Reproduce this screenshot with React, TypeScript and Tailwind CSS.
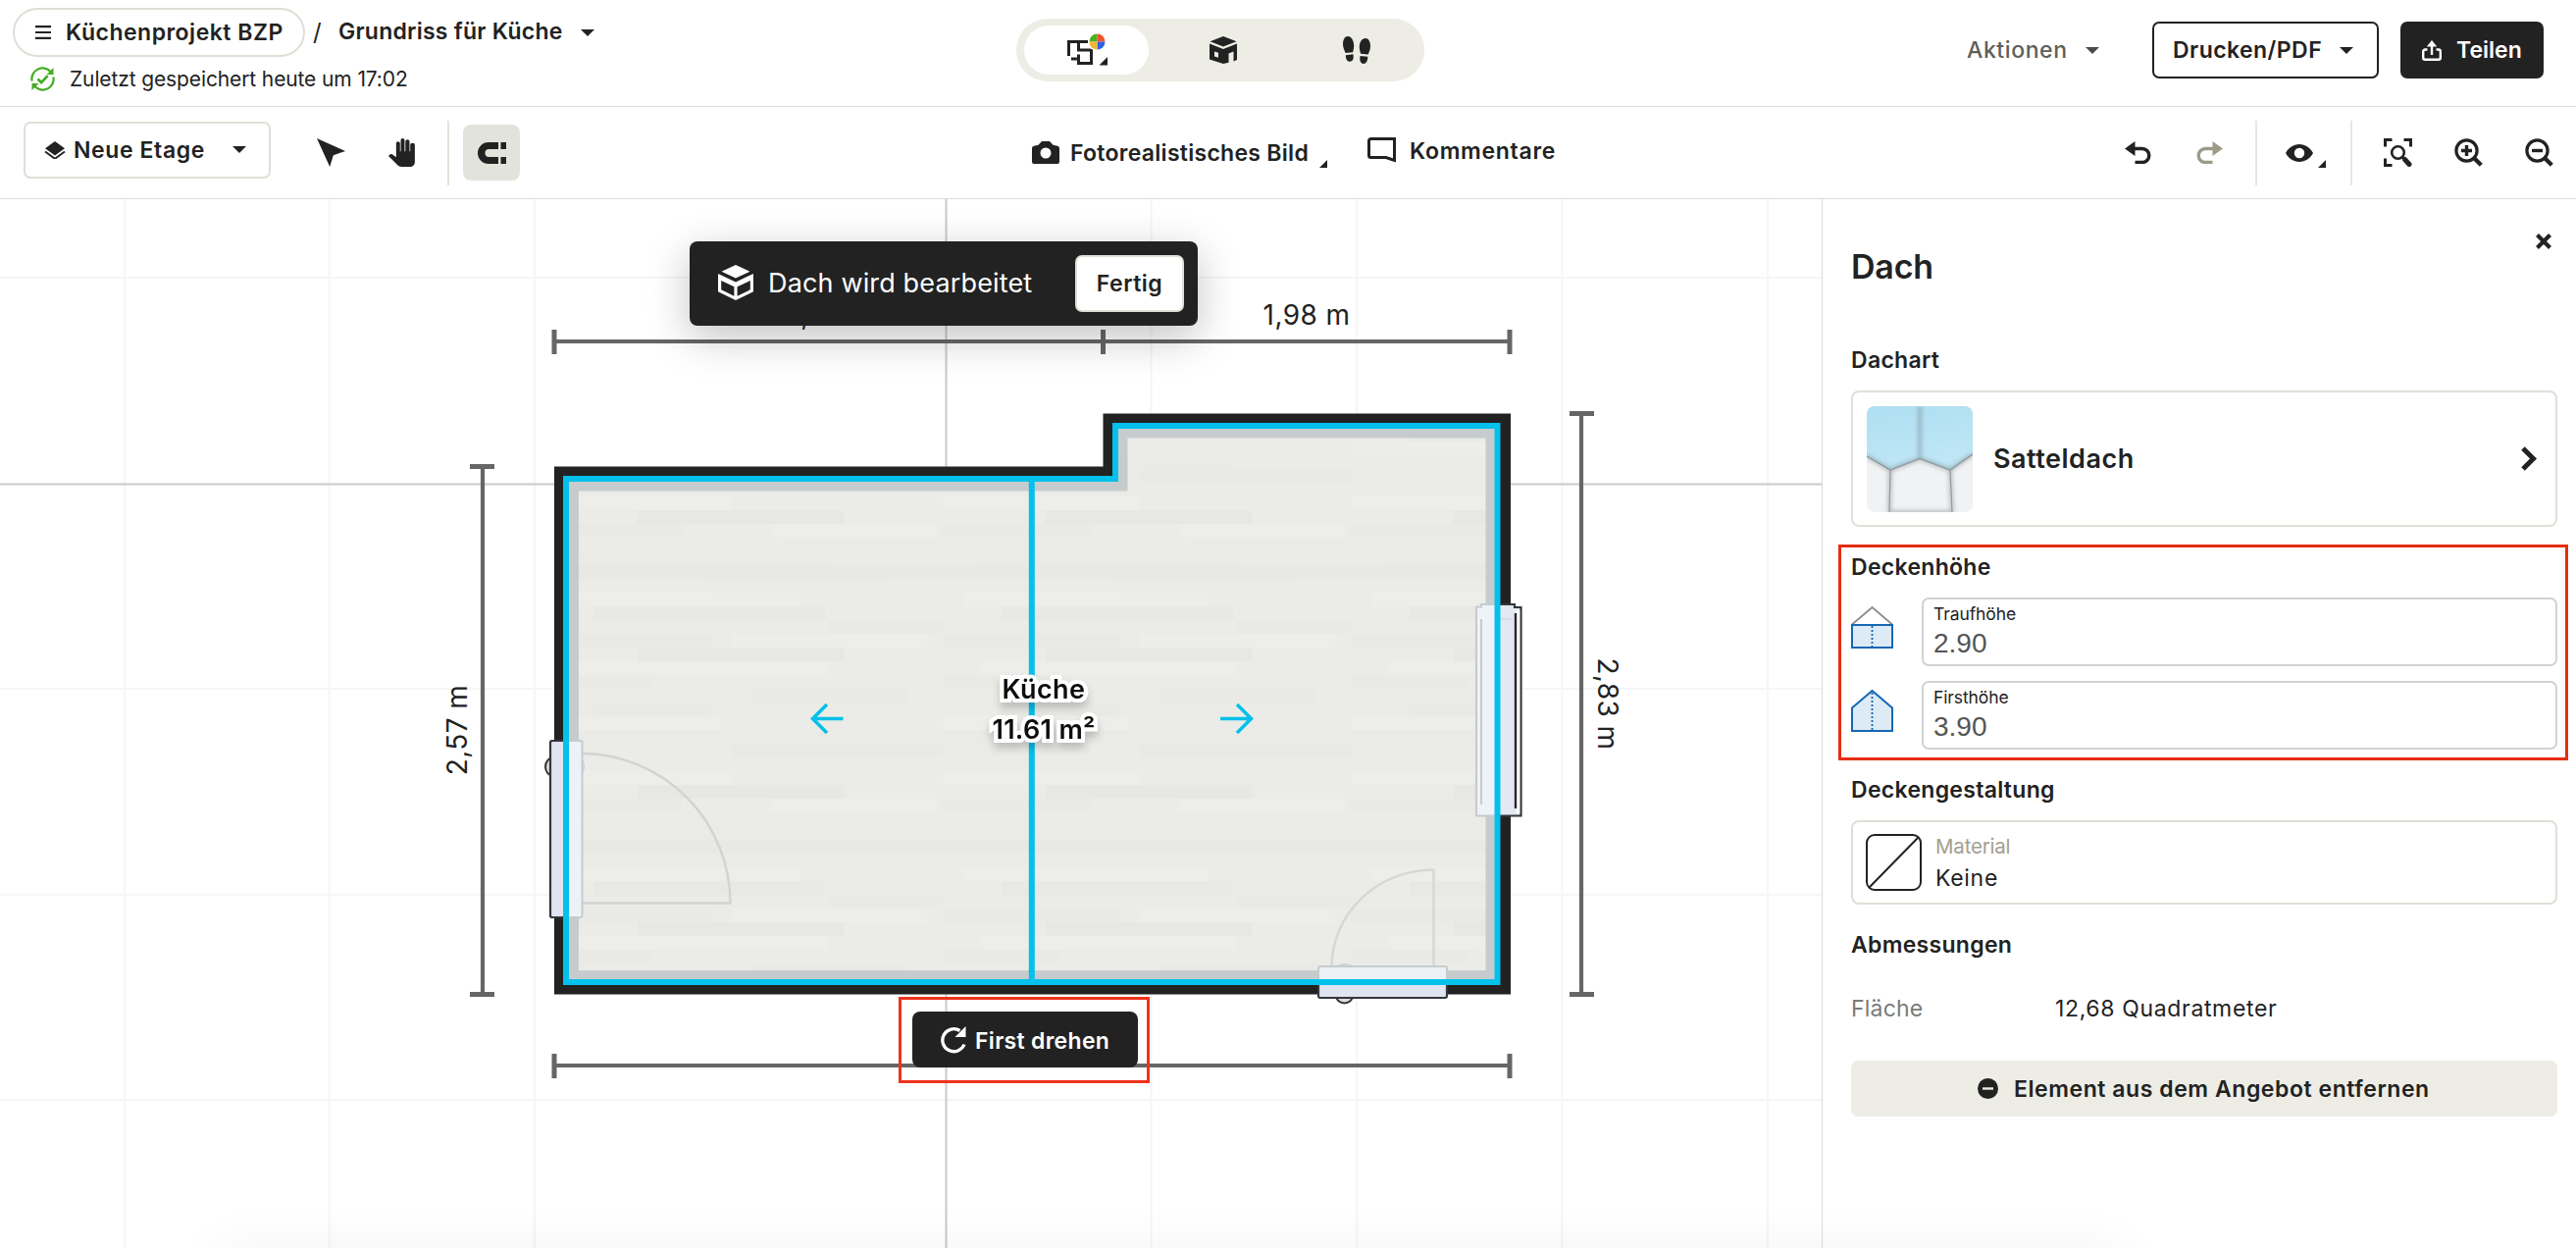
import type { ReactNode } from 'react';

type IconProps = { className?: string };

const Caret = ({ className = '' }: IconProps) => (
  <svg viewBox="0 0 14 7" className={`w-[14px] h-[7px] shrink-0 ${className}`} fill="currentColor">
    <path d="M0 0h14L7 7z" />
  </svg>
);

const Corner = ({ className = '' }: IconProps) => (
  <svg viewBox="0 0 8 8" className={`w-2 h-2 shrink-0 ${className}`} fill="currentColor">
    <path d="M8 0v8H0z" />
  </svg>
);

const SavedIcon = () => (
  <svg viewBox="0 0 25 25" className="w-[25px] h-[25px] shrink-0" fill="none" stroke="#42ad22" strokeWidth="2.2">
    <path d="M1.6 14.5A11 11 0 0 1 20.5 5" />
    <path d="M23.4 10.5A11 11 0 0 1 4.5 20" />
    <path d="M23.5 1v7h-7z" fill="#42ad22" stroke="none" />
    <path d="M1.5 24v-7h7z" fill="#42ad22" stroke="none" />
    <path d="M7.5 12.5l3.6 3.6 6.6-7" strokeWidth="2.8" />
  </svg>
);

const LayersIcon = () => (
  <svg viewBox="0 0 22 18" className="w-[22px] h-[18px] shrink-0" fill="currentColor">
    <path d="M11 0l10 7.2-10 7.3L1 7.2z" />
    <path d="M1 10.6l10 7.2 10-7.2" fill="none" stroke="currentColor" strokeWidth="1.9" />
  </svg>
);

const CursorIcon = () => (
  <svg viewBox="0 0 29 29" className="w-[29px] h-[29px]" fill="currentColor">
    <path d="M0 0l29 13-12.2 4.2L13.2 29z" />
  </svg>
);

const HandIcon = () => (
  <svg viewBox="1 0 22 24" className="w-[27px] h-[29px]" fill="currentColor" preserveAspectRatio="none">
    <path d="M22.9 5.5V20c0 2.2-1.8 4-4 4h-7.2c-1.1 0-2.1-.4-2.9-1.2L1 14.8s1.2-1.2 1.3-1.2c.7-.5 1.5-.3 2.1.1L7.4 16V4.2c0-.9.7-1.6 1.6-1.6s1.6.7 1.6 1.6V11h.6V1.6c0-.9.7-1.6 1.6-1.6s1.6.7 1.6 1.6V11h.7V2.6c0-.9.7-1.6 1.7-1.6.9 0 1.7.7 1.7 1.6V11h.6V5.5c0-.9.7-1.6 1.9-1.6s1.9.7 1.9 1.6z" />
  </svg>
);

const MagnetIcon = () => (
  <svg viewBox="0 0 29 22" className="w-[29px] h-[22px]" fill="currentColor">
    <path d="M21 0H11a11 11 0 0 0 0 22h10v-7H11.5a4 4 0 0 1 0-8H21z" />
    <path d="M23.5 0H29v7h-5.5zM23.5 15H29v7h-5.5z" />
  </svg>
);

const PlanIcon = () => (
  <svg viewBox="0 0 42 33" className="w-[42px] h-[33px]">
    <g fill="none" stroke="#222" strokeWidth="3">
      <path d="M21 8.5H1.5V23" />
      <path d="M11.5 8.5v8.5H24.5V30.5H11.5V21.5M4 26h7.5" />
    </g>
    <circle cx="30.5" cy="8.5" r="9.5" fill="#fff" />
    <path d="M30.5 8.5v-8a8 8 0 0 0-8 8z" fill="#4caf1e" />
    <path d="M30.5 8.5h8a8 8 0 0 0-8-8z" fill="#f4512c" />
    <path d="M30.5 8.5v8a8 8 0 0 0 8-8z" fill="#2f62e0" />
    <path d="M30.5 8.5h-8a8 8 0 0 0 8 8z" fill="#f2b636" />
    <path d="M41 24v8.5h-8.5z" fill="#222" />
  </svg>
);

const HouseIcon = () => (
  <svg viewBox="0 0 28 28" className="w-7 h-7" fill="#222">
    <path d="M14 0l13.5 5.3L14 10.6.5 5.3z" />
    <path fillRule="evenodd" d="M0 7.5l14 5.6 14-5.6V24l-3.5 1.4V15.5l-5 2v9.2L14 28 0 23.5zM5 15.5v5l4 1.2v-5z" />
  </svg>
);

const FeetIcon = () => (
  <svg viewBox="0 0 28 28" className="w-7 h-7" fill="#222">
    <path d="M5 0c3.8 0 6 4.5 6.2 9 .1 3-.7 5-1 7.2L2.5 17C1.5 14 0 11.5 0 8c0-4.5 2-8 5-8z" />
    <path d="M2.8 19.3l7.6-1c1 4-.2 7.4-3.2 7.5-3 .1-4.2-2.5-4.4-6.5z" />
    <path d="M23 2c3 0 5 3.5 5 8 0 3.5-1.3 5.5-2.3 8.5L18 17.7c-.3-2.2-1.3-4.2-1.2-7.2C17 6 19.2 2 23 2z" />
    <path d="M17.6 20l7.8.8c-.3 4.5-1.5 7.2-4.5 7.2-3 0-4.3-4-3.3-8z" />
  </svg>
);

const ShareIcon = () => (
  <svg viewBox="0 0 20 21" className="w-5 h-[21px]" fill="none" stroke="currentColor" strokeWidth="2.4">
    <path d="M5.5 9.5H3.2a2 2 0 0 0-2 2v6.3a2 2 0 0 0 2 2h13.6a2 2 0 0 0 2-2v-6.3a2 2 0 0 0-2-2h-2.3" />
    <path d="M10 15V5" />
    <path d="M10 0l5.2 6.5H4.8z" fill="currentColor" stroke="none" />
  </svg>
);

const CameraIcon = () => (
  <svg viewBox="0 0 28 23" className="w-7 h-[23px] shrink-0" fill="currentColor">
    <path fillRule="evenodd" d="M10 0h8l3.5 3.8 4.5 1a2.5 2.5 0 0 1 2 2.5V21a2 2 0 0 1-2 2H2a2 2 0 0 1-2-2V7.3a2.5 2.5 0 0 1 2-2.5l4.5-1zM14 6.5a5.5 5.5 0 1 0 0 11 5.5 5.5 0 0 0 0-11z" />
  </svg>
);

const CommentIcon = () => (
  <svg viewBox="0 0 29 26" className="w-[29px] h-[26px] shrink-0" fill="none" stroke="currentColor" strokeWidth="3">
    <path d="M3.5 1.5h24v22l-8.5-3H3.5a2 2 0 0 1-2-2v-15a2 2 0 0 1 2-2z" />
  </svg>
);

const UndoIcon = ({ className = '' }: IconProps) => (
  <svg viewBox="0 0 27 23" className={`w-[27px] h-[23px] ${className}`}>
    <path d="M0 7.5L10.5 0v15z" fill="currentColor" />
    <path d="M9 7.5h8.8a7 7 0 0 1 0 14H10.5" fill="none" stroke="currentColor" strokeWidth="3.4" />
  </svg>
);

const EyeIcon = () => (
  <svg viewBox="0 0 28 18" className="w-7 h-[18px]" fill="currentColor">
    <path fillRule="evenodd" d="M14 0c6 0 11 3.5 14 9-3 5.5-8 9-14 9S3 14.5 0 9C3 3.5 8 0 14 0zM14 3.8a5.2 5.2 0 1 0 0 10.4 5.2 5.2 0 0 0 0-10.4z" />
  </svg>
);

const FitIcon = () => (
  <svg viewBox="0 0 29 29" className="w-[29px] h-[29px]" fill="none" stroke="currentColor" strokeWidth="3">
    <path d="M1.5 8.5v-7h7M20.5 1.5h7v7M1.5 20.5v7h7" />
    <circle cx="14.5" cy="14.5" r="6.3" strokeWidth="2.6" />
    <path d="M18.5 18.5l2 2" strokeWidth="2.6" />
    <path d="M21.5 21.5l4.5 5" strokeWidth="5" strokeLinecap="round" />
  </svg>
);

const ZoomIcon = ({ plus }: { plus?: boolean }) => (
  <svg viewBox="0 0 29 29" className="w-[29px] h-[29px]" fill="none" stroke="currentColor" strokeWidth="3.2">
    <circle cx="12.5" cy="12.5" r="10.6" />
    <path d="M20 20l7.3 7.3" strokeWidth="4.2" />
    <path d={plus ? 'M7 12.5h11M12.5 7v11' : 'M7 12.5h11'} strokeWidth="3.4" />
  </svg>
);

const RoofIcon = () => (
  <svg viewBox="0 0 36 36" className="w-9 h-9 shrink-0 -mt-[3px]" fill="#fff">
    <path d="M18 0l14.5 6.8L18 13.6 3.5 6.8z" />
    <path fillRule="evenodd" d="M0 9l18 8.4L36 9v18.3L18 36 0 27.3zM3.2 16v9.3l13.2 6.5v-9.5zM32.8 16v9.3l-13.2 6.5v-9.5z" />
  </svg>
);

const RotateIcon = () => (
  <svg viewBox="0 0 28 28" className="w-7 h-7 shrink-0" fill="none" stroke="#fff" strokeWidth="3.3">
    <path d="M20.5 4.5A11.5 11.5 0 1 0 25 18.5" />
    <path d="M26.5 0v11H15.5z" fill="#fff" stroke="none" />
  </svg>
);

const Thumb = () => (
  <svg viewBox="0 0 108 108" className="w-[108px] h-[108px] rounded-lg shrink-0">
    <defs>
      <linearGradient id="sky" x1="0" y1="0" x2="0.3" y2="1">
        <stop offset="0" stopColor="#aedff2" />
        <stop offset="1" stopColor="#bfe6f5" />
      </linearGradient>
      <filter id="soft"><feGaussianBlur stdDeviation="2.2" /></filter>
    </defs>
    <rect width="108" height="108" fill="#f1f2f3" />
    <path d="M0 0h108v49L85 65 54 53.5 24 65 0 51z" fill="url(#sky)" />
    <g fill="none" stroke="#6f7b80" strokeWidth="3.5" filter="url(#soft)" opacity="0.5">
      <path d="M54 0v53M0 51l24 14 30-11.5L85 65l23-16M24 65l-1 43M85 65l2 43M23 108h64" />
    </g>
    <path d="M0 51l24 14 30-11.5L85 65l23-16" fill="none" stroke="#8a959a" strokeWidth="1.2" />
    <path d="M24 65l-1 43M85 65l2 43" stroke="#999" strokeWidth="1.2" />
  </svg>
);

const EavesIcon = () => (
  <svg viewBox="0 0 43 43" className="w-[43px] h-[43px]" fill="none">
    <path d="M1 18.5L21.5 1 42 18.5" stroke="#8c8c8c" strokeWidth="1.8" />
    <path d="M1 19h41v23H1z" fill="#dcebf5" stroke="#1767b3" strokeWidth="2" />
    <path d="M21.5 20v21" stroke="#1767b3" strokeWidth="1.8" strokeDasharray="2 2" />
  </svg>
);

const RidgeIcon = () => (
  <svg viewBox="0 0 43 43" className="w-[43px] h-[43px]" fill="none">
    <path d="M1 18.5L21.5 1 42 18.5V42H1z" fill="#dcebf5" stroke="#1767b3" strokeWidth="2" />
    <path d="M21.5 3v38" stroke="#1767b3" strokeWidth="1.8" strokeDasharray="2 2" />
  </svg>
);

// x, y, width, opacity of the floor planks inside one pattern tile
const planks = [
  [105, 20, 210, 0.022], [0, 34, 150, 0.006], [260, 48, 150, 0.008], [40, 62, 260, 0.008],
  [0, 76, 416, 0.016], [180, 90, 180, 0.008], [60, 118, 236, 0.014], [300, 132, 116, 0.01],
  [0, 146, 180, 0.006], [105, 160, 210, 0.022], [0, 188, 120, 0.01], [220, 202, 160, 0.012],
  [60, 216, 120, 0.01], [0, 244, 300, 0.008], [200, 258, 216, 0.01],
];
const lightPlanks = [[0, 6, 200], [240, 34, 170], [20, 104, 250], [200, 146, 200], [40, 174, 260], [0, 230, 190]];

const gridX = [127, 335.5, 545, 1173.5, 1383, 1592.5, 1802];
const gridY = [283, 702, 912, 1121];

function FloorPlan() {
  return (
    <svg viewBox="0 203 1857 1069" className="block w-[1857px] h-[1069px]" fontFamily="Inter, sans-serif">
      <defs>
        <pattern id="floor" x="545" y="500" width="416" height="280" patternUnits="userSpaceOnUse">
          <rect width="416" height="280" fill="#ebece8" />
          {planks.map(([x, y, w, o]) => (
            <rect key={`${x}-${y}`} x={x} y={y} width={w} height="14" fill="#4a5040" opacity={o} />
          ))}
          {lightPlanks.map(([x, y, w]) => (
            <rect key={`${x}-${y}`} x={x} y={y} width={w} height="14" fill="#fff" opacity="0.1" />
          ))}
        </pattern>
        <filter id="lift" x="-20%" y="-20%" width="140%" height="150%">
          <feDropShadow dx="0" dy="6" stdDeviation="4" floodColor="#000" floodOpacity="0.2" />
        </filter>
      </defs>

      {/* grid */}
      <g stroke="#f6f6f6" strokeWidth="2">
        {gridX.map((x) => <path key={x} d={`M${x} 203V1272`} />)}
        {gridY.map((y) => <path key={y} d={`M0 ${y}H1857`} />)}
      </g>
      <path d="M964.5 203V1272M0 493.5H1857" stroke="#c9c9c9" strokeWidth="2" />

      {/* dimensions */}
      <g stroke="#666" fill="none">
        <path d="M565 348H1539M565 1086H1539M492 475V1013M1612 421V1013" strokeWidth="4.2" />
        <path d="M565 336V361M1124.5 336V361M1539 336V361M565 1074V1099M1539 1074V1099M479 475.5H504M479 1013.5H504M1600 421.5H1625M1600 1013.5H1625" strokeWidth="5" />
      </g>
      <g fill="#222" fontSize="28" letterSpacing="0.4">
        <text x="845" y="331" textAnchor="middle">2,67 m</text>
        <text x="1332" y="331" textAnchor="middle">1,98 m</text>
        <text transform="translate(475.5 744) rotate(-90)" textAnchor="middle">2,57 m</text>
        <text transform="translate(1628.5 717.5) rotate(90)" textAnchor="middle">2,83 m</text>
      </g>

      {/* walls */}
      <path d="M565 475.5H1124.5V421.5H1540V1013.5H565z" fill="#222" />
      <path d="M577 488H1137V434H1526.5V1001H577z" fill="#c6ccce" />
      <path d="M590 500.5H1149.5V446.5H1514.5V989H590z" fill="url(#floor)" />

      {/* left door */}
      <g>
        <ellipse cx="564" cy="781.5" rx="8" ry="9.5" fill="#ddd" stroke="#333" strokeWidth="2" />
        <ellipse cx="589" cy="781.5" rx="6.5" ry="9" fill="#dfe3e3" stroke="#c6ccce" />
        <path d="M594 768A152 152.5 0 0 1 744.5 920.5H594" fill="none" stroke="#d2d4d2" strokeWidth="2.5" />
        <rect x="561" y="755" width="32.5" height="180" rx="2" fill="#edf2f9" stroke="#c6ccce" strokeWidth="2" />
        <path d="M577 755H563a2 2 0 0 0-2 2V933a2 2 0 0 0 2 2H577" fill="#e0e4f1" stroke="#34363c" strokeWidth="2.2" />
      </g>

      {/* bottom door */}
      <g>
        <ellipse cx="1370.5" cy="1016" rx="8" ry="6.5" fill="#ddd" stroke="#333" strokeWidth="2" />
        <ellipse cx="1370.5" cy="985" rx="8" ry="3" fill="#cfd6d6" />
        <path d="M1357.5 985A104 99 0 0 1 1461.5 886.5V985" fill="none" stroke="#d6d8d6" strokeWidth="2.5" />
        <rect x="1344" y="985" width="131" height="32" rx="2" fill="#ebf2f6" stroke="#c6ccce" strokeWidth="2" />
        <path d="M1344 1001V1015a2 2 0 0 0 2 2H1473a2 2 0 0 0 2-2V1001" fill="#e0e4f1" stroke="#34363c" strokeWidth="2.2" />
      </g>

      {/* window */}
      <g>
        <path d="M1527 616H1510V618.500H1505V831.5H1527" fill="#edf3f8" stroke="#c6ccce" strokeWidth="2.2" />
        <path d="M1510 631V820" stroke="#c6ccce" strokeWidth="2" />
        <path d="M1526.5 616H1544V619H1550.5V831.5H1526.5" fill="#e4e8f3" stroke="#34363c" strokeWidth="2.2" />
        <path d="M1547.5 622V829" stroke="#fff" strokeWidth="3.5" />
        <path d="M1545 625V824" stroke="#26282d" strokeWidth="2.4" />
        <path d="M1529 631H1544" stroke="#cdd2de" />
      </g>

      {/* roof outline, ridge and slope direction */}
      <g fill="none" stroke="#05c0ea">
        <path d="M577 488H1137V434H1526.5V1001H577z" strokeWidth="6" />
        <path d="M1051.8 488V1001" strokeWidth="6" />
        <path d="M859.5 732.5H829M843 718L828.5 732.5 843 747" strokeWidth="3.5" />
        <path d="M1244 732.5H1275.5M1261 718L1275.5 732.5 1261 747" strokeWidth="3.5" />
      </g>

      <g
        filter="url(#lift)"
        fill="#111"
        stroke="#fff"
        strokeWidth="8"
        strokeLinejoin="miter"
        paintOrder="stroke"
        fontSize="27"
        fontWeight="600"
        textAnchor="middle"
      >
        <text x="1064" y="711.5" letterSpacing="0.4">Küche</text>
        <text x="1064" y="752.5" letterSpacing="0.3">11.61 m²</text>
      </g>
    </svg>
  );
}

function HeightField({ icon, label, value }: { icon: ReactNode; label: string; value: string }) {
  return (
    <div className="flex h-[70px]">
      <div className="w-[72px] pt-[9px] shrink-0">{icon}</div>
      <div className="flex-1 border-2 border-[#d2d2d2] rounded-[7px] bg-white pt-[3px] pl-[10px]">
        <div className="text-[17.5px] leading-6 tracking-[-0.1px]">{label}</div>
        <div className="text-[28px] leading-9 text-[#555] font-['Liberation_Sans',Arial,sans-serif]">{value}</div>
      </div>
    </div>
  );
}

const SectionTitle = ({ children, className = '' }: { children: ReactNode; className?: string }) => (
  <h3 className={`text-[23px] leading-8 font-semibold tracking-[0.3px] ${className}`}>{children}</h3>
);

function TopBar() {
  return (
    <header className="flex h-[109px] border-b border-[#dcdcdc] shrink-0">
      <div className="w-[1036px] shrink-0 pt-2 pl-[13px]">
        <div className="flex items-center h-[50px] font-semibold text-[23px]">
          <div className="flex items-center h-[50px] w-[298px] border-2 border-[#dfdfd6] rounded-full pl-[21px]">
            <svg viewBox="0 0 16 14" className="w-4 h-[14px]" stroke="currentColor" strokeWidth="2.2">
              <path d="M0 1.2h16M0 7h16M0 12.800h16" />
            </svg>
            <span className="ml-[15px] mt-px tracking-[0.5px]">Küchenprojekt BZP</span>
          </div>
          <span className="ml-[8px] w-[26px] font-normal text-[24px]">/</span>
          <span className="w-[248px] -mt-px tracking-[0.25px]">Grundriss für Küche</span>
          <Caret className="-ml-px" />
        </div>
        <div className="flex items-center h-[45px] pl-[18px]">
          <SavedIcon />
          <span className="ml-[15px] text-[21px] tracking-[-0.12px]">Zuletzt gespeichert heute um 17:02</span>
        </div>
      </div>

      <div className="flex items-center gap-3 mt-[19px] h-16 w-[416px] shrink-0 rounded-full bg-[#edede5] px-2">
        <div className="flex items-center justify-center w-[127px] h-[50px] shrink-0 rounded-full bg-white pl-[3px] pb-0.5">
          <PlanIcon />
        </div>
        <div className="flex justify-center w-[127px] shrink-0"><HouseIcon /></div>
        <div className="flex justify-center w-[122px] shrink-0"><FeetIcon /></div>
      </div>

      <div className="ml-auto mr-[33px] mt-[22px] h-[58px] flex items-center text-[23px] font-semibold">
        <span className="w-[121px] mt-px text-[#5f5f58] tracking-[0.6px] font-medium">Aktionen</span>
        <Caret className="text-[#4c4c46]" />
        <div className="ml-[54px] w-[231px] h-[58px] border-2 border-[#222] rounded-[7px] flex items-center pl-[19px]">
          <span className="w-[170px] mt-px tracking-[0.45px]">Drucken/PDF</span>
          <Caret />
        </div>
        <div className="ml-[22px] w-[146px] h-[58px] rounded-[7px] bg-[#222] text-white flex items-center pl-[22px]">
          <ShareIcon />
          <span className="ml-[15px] mt-px">Teilen</span>
        </div>
      </div>
    </header>
  );
}

function ToolBar() {
  return (
    <div className="flex h-[94px] border-b border-[#dcdcdc] shrink-0 text-[23px] font-semibold">
      <div className="w-[1052px] flex items-center pl-6">
        <div className="w-[252px] h-[58px] -mt-[6px] border-2 border-[#dfdfd6] rounded-[7px] flex items-center pl-[19px]">
          <LayersIcon />
          <span className="ml-[8px] mt-[2px] w-[162px] tracking-[0.6px]">Neue Etage</span>
          <Caret />
        </div>
        <div className="ml-[47px]"><CursorIcon /></div>
        <div className="ml-11"><HandIcon /></div>
        <div className="ml-[33px] w-0.5 h-[66px] bg-[#e2e2da]" />
        <div className="ml-[14px] w-[58px] h-[57px] rounded-lg bg-[#e2e3da] flex items-center justify-center">
          <MagnetIcon />
        </div>
      </div>

      <div className="flex items-center">
        <CameraIcon />
        <span className="ml-[11px] mt-px w-[254px] tracking-[0.28px]">Fotorealistisches Bild</span>
        <Corner className="mt-[22px]" />
        <div className="flex items-center ml-[41px] -mt-[5px]">
          <CommentIcon />
          <span className="ml-[14px] mt-[2px] tracking-[0.7px]">Kommentare</span>
        </div>
      </div>

      <div className="flex items-center ml-auto mr-[23px]">
        <UndoIcon />
        <UndoIcon className="ml-[46px] -scale-x-100 text-[#9d9b88]" />
        <div className="ml-[33px] w-0.5 h-[66px] bg-[#e6e6e6]" />
        <div className="ml-[29px]"><EyeIcon /></div>
        <Corner className="ml-[5px] mt-[22px]" />
        <div className="ml-[25px] w-0.5 h-[66px] bg-[#e6e6e6]" />
        <div className="ml-8"><FitIcon /></div>
        <div className="ml-[43px]"><ZoomIcon plus /></div>
        <div className="ml-[43px]"><ZoomIcon /></div>
      </div>
    </div>
  );
}

function SidePanel() {
  return (
    <aside className="flex-1 border-l border-[#dcdcdc] pl-[29px] pr-[19px] pt-[35px]">
      <div className="flex justify-between">
        <h2 className="mt-[12px] -mb-px text-[34px] leading-[44px] font-semibold tracking-[-0.2px]">Dach</h2>
        <svg viewBox="0 0 16 16" className="w-4 h-4 mr-[6px]" stroke="currentColor" strokeWidth="4.2">
          <path d="M1.5 1.5l13 13M14.5 1.5l-13 13" />
        </svg>
      </div>

      <SectionTitle className="mt-[58px]">Dachart</SectionTitle>
      <div className="mt-[15px] h-[139px] border-2 border-[#e0e0da] rounded-lg flex items-center pl-[14px] pr-[18px]">
        <Thumb />
        <span className="ml-[21px] mt-px text-[27px] font-semibold tracking-[0.5px]">Satteldach</span>
        <svg viewBox="0 0 17 25" className="ml-auto w-[17px] h-[25px]" fill="none" stroke="currentColor" strokeWidth="5">
          <path d="M2 2l10.5 10.5L2 23" />
        </svg>
      </div>

      <section className="mt-[18px] h-[220px] -ml-[13px] -mr-[11px] border-3 border-[#e62d10] pl-[10px] pr-2 pt-1">
        <SectionTitle>Deckenhöhe</SectionTitle>
        <div className="mt-[15px] flex flex-col gap-[15px]">
          <HeightField icon={<EavesIcon />} label="Traufhöhe" value="2.90" />
          <HeightField icon={<RidgeIcon />} label="Firsthöhe" value="3.90" />
        </div>
      </section>

      <SectionTitle className="mt-[14px]">Deckengestaltung</SectionTitle>
      <div className="mt-[15px] h-[86px] border-2 border-[#dfdfd6] rounded-lg flex items-center pl-[13px]">
        <svg viewBox="0 0 57 58" className="w-[57px] h-[58px]" fill="none" stroke="#222" strokeWidth="2">
          <rect x="1" y="1" width="55" height="56" rx="8" />
          <path d="M3.5 54.5L53.5 3.5" />
        </svg>
        <div className="ml-[14px] leading-[33px]">
          <div className="-mt-px text-[20.5px] text-[#a1a08f] tracking-[-0.2px]">Material</div>
          <div className="text-[23px] tracking-[0.7px]">Keine</div>
        </div>
      </div>

      <SectionTitle className="mt-[25px]">Abmessungen</SectionTitle>
      <div className="mt-[33px] flex text-[23px] leading-8">
        <span className="w-[208px] text-[#7a7a7a] tracking-[0.2px]">Fläche</span>
        <span className="tracking-[0.65px]">12,68 Quadratmeter</span>
      </div>

      <button className="mt-[37px] w-full h-[57px] rounded-[7px] bg-[#edede5] flex items-center pl-[129px] text-[23px] font-semibold">
        <svg viewBox="0 0 21 21" className="w-[21px] h-[21px]">
          <circle cx="10.5" cy="10.5" r="10.5" fill="#222" />
          <path d="M5 10.5h11" stroke="#edede5" strokeWidth="2.4" />
        </svg>
        <span className="ml-[16px] mt-[2px] tracking-[0.56px]">Element aus dem Angebot entfernen</span>
      </button>
    </aside>
  );
}

export default function App() {
  return (
    <div className="relative flex flex-col w-[2626px] h-[1272px] overflow-hidden bg-white text-[#222] whitespace-nowrap font-['Inter','Liberation_Sans',sans-serif]">
      <TopBar />
      <ToolBar />
      <div className="flex flex-1">
        <main className="relative w-[1857px] h-[1069px] overflow-hidden">
          <FloorPlan />

          <div className="absolute left-[703px] top-[43px] w-[518px] h-[86px] rounded-lg bg-[#222] shadow-[0_12px_44px_rgba(0,0,0,0.24)] flex items-center pl-[29px] pr-[14px]">
            <RoofIcon />
            <span className="ml-[15px] mt-px text-[27px] text-white tracking-[0.15px]">Dach wird bearbeitet</span>
            <button className="ml-auto w-[111px] h-[58px] rounded-[7px] bg-white border-2 border-[#dfdfd6] text-[23px] font-semibold tracking-[0.5px]">
              Fertig
            </button>
          </div>

          <button className="absolute left-[930px] top-[828px] w-[230px] h-[57px] rounded-lg bg-[#222] text-white flex items-center pl-[28px] text-[23px] font-semibold">
            <RotateIcon />
            <span className="ml-[8px] mt-[3px] tracking-[0.3px]">First drehen</span>
          </button>
          <div className="absolute left-[916px] top-[813px] w-[256px] h-[88px] border-3 border-[#f0321a]" />
        </main>
        <SidePanel />
      </div>
      <div className="absolute left-[240px] right-[480px] top-[1292px] h-10 shadow-[0_0_60px_16px_rgba(0,0,0,0.06)]" />
    </div>
  );
}
